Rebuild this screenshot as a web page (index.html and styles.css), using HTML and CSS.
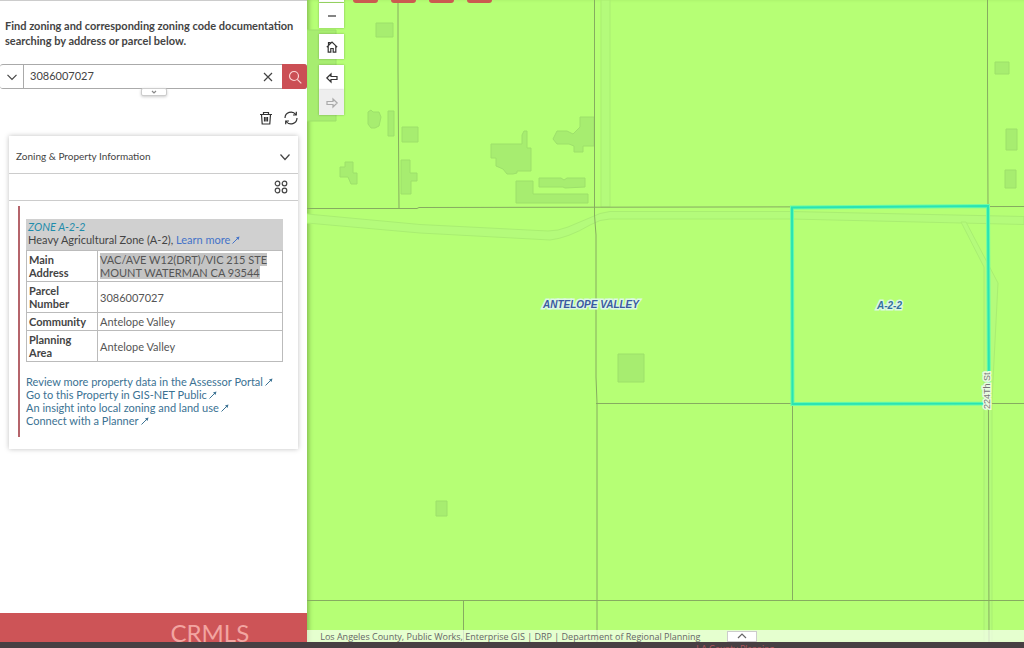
FILE: index.html
```html
<!DOCTYPE html>
<html lang="en">
<head>
  <meta charset="UTF-8">
  <meta name="viewport" content="width=device-width, initial-scale=1">
  <title>Zoning &amp; Property Information</title>
  <link rel="stylesheet" href="styles.css">
</head>
<body>
  <main class="viewer">
    <aside class="sidebar">
      <p class="intro">Find zoning and corresponding zoning code documentation searching by address or parcel below.</p>

      <form class="search">
        <button class="search-source" type="button" aria-label="Search source">
          <svg width="12" height="12" viewBox="0 0 12 12"><path d="M1.5 3.8 6 8.3l4.500-4.500"/></svg>
        </button>
        <input class="search-input" type="text" aria-label="Address or parcel" value="3086007027">
        <button class="search-clear" type="button" aria-label="Clear">
          <svg width="10" height="10" viewBox="0 0 10 10"><path d="m1 1 8 8M9 1 1 9"/></svg>
        </button>
        <button class="search-go" type="submit" aria-label="Search">
          <svg width="14" height="14" viewBox="0 0 14 14"><circle cx="6" cy="6" r="4.500"/><path d="m9.300 9.300 4 4"/></svg>
        </button>
        <button class="search-tab" type="button" aria-label="Expand">
          <svg width="6" height="4" viewBox="0 0 6 4"><path d="m1 1 2 2 2-2"/></svg>
        </button>
      </form>

      <div class="actions">
        <button type="button" aria-label="Clear results">
          <svg width="14" height="14" viewBox="0 0 14 14"><path d="M1 3.500h12M4.500 3.500v-2h5v2M2.500 3.500l.7 9.500h7.600l.7-9.500M5.500 6v4.500M7 6v4.500M8.500 6v4.500"/></svg>
        </button>
        <button type="button" aria-label="Refresh">
          <svg width="14" height="14" viewBox="0 0 14 14"><path d="M1 7a6 6 0 0 1 10.800-3.500M13 7a6 6 0 0 1-10.800 3.500M12.300.8v3.200H9M1.700 13.200V10H5"/></svg>
        </button>
      </div>

      <section class="card">
        <header class="card-head">
          <h2>Zoning &amp; Property Information</h2>
          <button type="button" aria-label="Collapse">
            <svg width="12" height="12" viewBox="0 0 12 12"><path d="M1.500 3.500 6 8.500l4.500-5"/></svg>
          </button>
        </header>
        <div class="card-tools">
          <button type="button" aria-label="Actions">
            <svg width="14" height="14" viewBox="0 0 14 14"><circle cx="3.500" cy="3.500" r="2.300"/><circle cx="10.500" cy="3.500" r="2.300"/><circle cx="3.500" cy="10.500" r="2.300"/><circle cx="10.500" cy="10.500" r="2.300"/></svg>
          </button>
        </div>
        <div class="card-body">
          <div class="result">
            <div class="zone">
              <em>ZONE A-2-2</em><br>
              Heavy Agricultural Zone (A-2), <a href="#">Learn more<svg class="ext" viewBox="0 0 8 8"><path d="m.5 7.500 6-6"/><path class="tip" d="M7.500.5 4 1.500 6.500 4z"/></svg></a>
            </div>
            <table class="facts">
              <tr><th>Main Address</th><td><span class="marked">VAC/AVE W12(DRT)/VIC 215 STE<br>MOUNT WATERMAN CA 93544</span></td></tr>
              <tr><th>Parcel Number</th><td>3086007027</td></tr>
              <tr><th>Community</th><td>Antelope Valley</td></tr>
              <tr><th>Planning Area</th><td>Antelope Valley</td></tr>
            </table>
            <ul class="links">
              <li><a href="#">Review more property data in the Assessor Portal<svg class="ext" viewBox="0 0 8 8"><path d="m.5 7.500 6-6"/><path class="tip" d="M7.500.5 4 1.500 6.500 4z"/></svg></a></li>
              <li><a href="#">Go to this Property in GIS-NET Public<svg class="ext" viewBox="0 0 8 8"><path d="m.5 7.500 6-6"/><path class="tip" d="M7.500.5 4 1.500 6.500 4z"/></svg></a></li>
              <li><a href="#">An insight into local zoning and land use<svg class="ext" viewBox="0 0 8 8"><path d="m.5 7.500 6-6"/><path class="tip" d="M7.500.5 4 1.500 6.500 4z"/></svg></a></li>
              <li><a href="#">Connect with a Planner<svg class="ext" viewBox="0 0 8 8"><path d="m.5 7.500 6-6"/><path class="tip" d="M7.500.5 4 1.500 6.500 4z"/></svg></a></li>
            </ul>
          </div>
        </div>
      </section>

      <footer class="brand">CRMLS</footer>
    </aside>

    <section class="map">
      <svg class="map-canvas" viewBox="307 0 717 642" preserveAspectRatio="xMinYMin slice">
        <!-- roads -->
        <g class="road">
          <path d="M307 214 420 224.500 548 231q10 0 20-4l32-13.500 10-2H791l233 5v8L791 219H610q-10 0-20 6-22 13-40 15L420 233l-113-10z"/>
          <path d="M601 0v207h9V0zM961 222l23 45v375h8V400l6-117-32-61z"/>
        </g>
        <!-- buildings -->
        <g class="building">
          <path class="lot" d="M307 30h29v91h-29z"/>
          <path d="M376 23h17v14h-17zM368 112l3-2 2 2h6l2 5-2 9-4 2h-4l-3-4zM388 111h6v25h-6zM402 127h16v15h-16zM401 160h9v13h7v8h-6v13h-10zM345 162h8v11h4v11h-6l-3-7h-8v-10h5z"/>
          <path d="M491 144h31v-9l2-4h3v17h4v23h-14v2l-4 1h-6l-4-5-7-3v-8h-5zM553 139l4-8h10l6 3 7-7v-10h14v29h-11v6h-9v-6l-5-2h-12zM516 181h17v13h55v9h-72zM539 178h22l3 2 3-2h18v9l-20 1-2-1h-24z"/>
          <path d="M618 354h26v28h-26zM436 501h11v15h-11zM995 62h14v12h-14zM1006 129h11v21h-11zM1005 170h11v18h-11z"/>
        </g>
        <!-- parcel lines -->
        <path class="parcel" d="M398 0v70l1 138M307 208.500h110l2-1 605-1M594.500 0v215l1.500 20v142l1 26v239M596 403.500h428M792.500 403v198M307 600.500h717M463.500 601v41M987.500 0v80l.5 127 1 435"/>
        <path class="selected-glow" d="M792 207.500 988 206l1 197.500-196.500.5z"/>
        <path class="selected" d="M792 207.500 988 206l1 197.500-196.500.5z"/>
        <text class="place" x="543" y="308">ANTELOPE VALLEY</text>
        <text class="place zone-label" x="877" y="309">A-2-2</text>
        <text class="street" transform="translate(990 409) rotate(-90)">224Th St</text>
      </svg>

      <div class="toolbar">
        <i></i><i></i><i></i><i></i>
      </div>

      <div class="controls">
        <div class="zoom">
          <button type="button" aria-label="Zoom in"><svg width="12" height="12" viewBox="0 0 12 12"><path d="M2 6h8M6 2v8"/></svg></button>
          <button type="button" aria-label="Zoom out"><svg width="12" height="12" viewBox="0 0 12 12"><path d="M2 6h8"/></svg></button>
        </div>
        <button type="button" aria-label="Home"><svg width="12" height="12" viewBox="0 0 12 12"><path d="M.8 6.200 6 1l5.200 5.200M2.200 5v6.200h2.600V7.500h2.400v3.700h2.600V5M2.500 4V1.500h1.500V3"/></svg></button>
        <div class="history">
          <button type="button" aria-label="Previous extent"><svg width="12" height="12" viewBox="0 0 12 12"><path d="M.8 6 5 2v2.500h6v3H5V10z"/></svg></button>
          <button type="button" aria-label="Next extent" disabled><svg width="12" height="12" viewBox="0 0 12 12"><path d="M11.200 6 7 2v2.500H1v3h6V10z"/></svg></button>
        </div>
      </div>

      <div class="attribution">
        <span>Los Angeles County, Public Works, Enterprise GIS | DRP | Department of Regional Planning</span>
        <button type="button" aria-label="Open attribute table"><svg width="10" height="6" viewBox="0 0 10 6"><path d="m1 5 4-4 4 4"/></svg></button>
      </div>
    </section>
  </main>
  <div class="taskbar">LA County Planning</div>
</body>
</html>
```
FILE: styles.css
```css
* { margin: 0; padding: 0; box-sizing: border-box; }
body {
  display: flex;
  flex-direction: column;
  height: 100vh;
  overflow: hidden;
  font-family: Lato, sans-serif;
  font-size: 11px;
  line-height: 13px;
  color: #444;
  background: #fff;
}
button {
  display: flex;
  align-items: center;
  justify-content: center;
  border: 0;
  background: none;
  color: inherit;
}
svg {
  fill: none;
  stroke: currentColor;
  stroke-width: 1.2;
}
a { color: #3b7293; text-decoration: none; }

.viewer {
  display: flex;
  flex: 1;
  min-height: 0;
}

/* sidebar */
.sidebar {
  display: flex;
  flex-direction: column;
  width: 30%;
  border-top: 1px solid #ccc;
}
.intro {
  padding: 17px 8px 16px 5px;
  font-size: 11px;
  font-weight: bold;
  line-height: 15px;
}
.search {
  position: relative;
  display: flex;
  height: 25px;
  border: 1px solid #aaa;
  border-left: 0;
  border-radius: 3px;
}
.search-source {
  width: 24px;
  border-right: 1px solid #aaa;
}
.search-input {
  flex: 1;
  min-width: 0;
  padding: 0 0 2px 6px;
  border: 0;
  font: 11px Lato, sans-serif;
  color: #444;
}
.search-clear { width: 30px; }
.search-go {
  width: 25px;
  margin: -1px;
  border-radius: 0 3px 3px 0;
  background: #cb4f55;
  color: #fbd5d5;
}
.search-tab {
  position: absolute;
  top: 100%;
  left: 46%;
  width: 26px;
  height: 8px;
  border: 1px solid #ccc;
  border-radius: 2px;
  background: #fff;
  color: #888;
  box-shadow: 0 1px 3px #ccc;
}
.actions {
  display: flex;
  justify-content: flex-end;
  gap: 11px;
  padding: 22px 9px 11px;
  color: #333;
}
.card {
  margin: 0 9px;
  background: #fff;
  box-shadow: 0 0 5px rgba(0, 0, 0, 0.25);
}
.card-head {
  display: flex;
  align-items: center;
  justify-content: space-between;
  height: 38px;
  padding: 4px 7px 0;
  border-bottom: 1px solid #ccc;
}
.card-head h2 {
  font-size: 10px;
  font-weight: normal;
}
.card-tools {
  display: flex;
  justify-content: flex-end;
  height: 27px;
  padding-right: 10px;
  border-bottom: 1px solid #ccc;
}
.card-body { padding: 5px 15px 12px 9px; }
.result {
  padding: 13px 0 10px 6px;
  border-left: 2px solid #b5646b;
}
.zone {
  padding: 1px 2px 4px;
  background: #d0d0d0;
}
.zone em { color: #1f8cab; }
.zone a { color: #4473c8; }
.ext {
  width: 8px;
  height: 8px;
  margin-left: 2px;
  stroke-width: 1;
}
.ext .tip { fill: currentColor; stroke: none; }
.facts {
  width: 100%;
  border-collapse: collapse;
}
.facts th, .facts td {
  padding: 2px;
  border: 1px solid #bbb;
  text-align: left;
}
.facts th { width: 71px; }
.facts td { color: #555; }
.marked { background: #c4c4c4; }
.links {
  margin-top: 13px;
  list-style: none;
}
.brand {
  height: 29px;
  margin-top: auto;
  padding: 8px 58px 0;
  background: #cd5457;
  color: #f2a5a1;
  font-size: 24px;
  line-height: 24px;
  text-align: right;
}

/* map */
.map {
  position: relative;
  flex: 1;
  overflow: hidden;
  background: #b6ff75;
  box-shadow: inset 4px 0 4px -2px rgba(90, 130, 50, 0.5);
}
.map-canvas {
  position: absolute;
  width: 100%;
  height: 100%;
}
.road path { fill: #b4fb7b; stroke: #a9ee72; stroke-width: 1; }
.building path { fill: #a7ed70; stroke: #9de06b; stroke-width: 1; }
.parcel { stroke: #86ac60; stroke-width: 1; }
.selected-glow { stroke: #6bfca5; stroke-width: 4; }
.selected { stroke: #2ae3b4; stroke-width: 2; }
.place {
  font: italic bold 10px "Liberation Sans", Arial, sans-serif;
  fill: #3a5aa0;
  stroke: #dcf8e4;
  stroke-width: 3;
  paint-order: stroke;
}
.zone-label { fill: #35719d; }
.street {
  font: 9px "Liberation Sans", Arial, sans-serif;
  fill: #777;
  stroke: #eafbe0;
  stroke-width: 3;
  paint-order: stroke;
}
.toolbar {
  position: absolute;
  top: 0;
  left: 46px;
  display: flex;
  gap: 13px;
}
.toolbar i {
  width: 25px;
  height: 3px;
  border-radius: 0 0 3px 3px;
  background: #cb5a50;
}
/* the zoom-in button runs off the top edge */
.controls {
  position: absolute;
  top: -23px;
  left: 12px;
  display: flex;
  flex-direction: column;
  gap: 6px;
}
.zoom {
  display: flex;
  flex-direction: column;
  gap: 1px;
}
.controls button {
  width: 25px;
  height: 25px;
  background: #fff;
  color: #333;
  box-shadow: 0 0 2px rgba(0, 0, 0, 0.3);
}
.controls button:disabled {
  background: #eee;
  color: #aaa;
}
.attribution {
  position: absolute;
  right: 0;
  bottom: 0;
  left: 0;
  display: flex;
  align-items: center;
  gap: 26px;
  height: 12px;
  padding-left: 13px;
  background: rgba(255, 255, 255, 0.65);
  font-family: "Open Sans", sans-serif;
  font-size: 9px;
  color: #666;
  white-space: nowrap;
}
.attribution button {
  width: 30px;
  height: 11px;
  border: 1px solid #ccc;
  background: #fff;
}
.taskbar {
  height: 6px;
  padding-left: 68%;
  overflow: hidden;
  background: #473f43;
  color: #a5525c;
  font-size: 9px;
}
```
